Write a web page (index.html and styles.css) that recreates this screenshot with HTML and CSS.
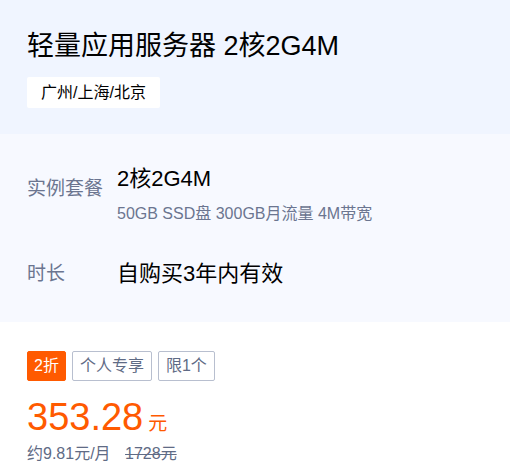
FILE: index.html
```html
<!DOCTYPE html>
<html lang="zh-CN">
<head>
    <meta charset="UTF-8">
    <meta name="viewport" content="width=device-width, initial-scale=1.0">
    <title>轻量应用服务器</title>
    <link rel="stylesheet" href="styles.css">
</head>
<body>
    <div class="product-head">
        <h1>轻量应用服务器 2核2G4M</h1>
        <span class="region">广州/上海/北京</span>
    </div>

    <div class="spec">
        <div class="spec-row spec-row-multi">
            <div class="spec-label">实例套餐</div>
            <div class="spec-value">
                <div class="value-main">2核2G4M</div>
                <div class="value-sub">50GB SSD盘 300GB月流量 4M带宽</div>
            </div>
        </div>
        <div class="spec-row">
            <div class="spec-label">时长</div>
            <div class="spec-value">
                <div class="value-main">自购买3年内有效</div>
            </div>
        </div>
    </div>

    <div class="price-box">
        <div class="tags">
            <span class="tag tag-hot">2折</span>
            <span class="tag">个人专享</span>
            <span class="tag">限1个</span>
        </div>
        <div class="price">
            <span class="price-num">353.28</span>
            <span class="price-unit">元</span>
        </div>
        <div class="price-extra">
            <span>约9.81元/月</span>
            <span class="origin">1728元</span>
        </div>
    </div>
</body>
</html>
```

FILE: styles.css
```css
body {
    margin: 0;
    font-family: "Liberation Sans", "Noto Sans CJK SC", sans-serif;
    background-color: #fff;
    color: #000;
}

.product-head {
    background-color: #f0f5ff;
    padding: 26px 27px 26px;
}

.product-head h1 {
    margin: 0;
    font-size: 27px;
    font-weight: normal;
    line-height: 40px;
}

.region {
    display: inline-block;
    margin-top: 11px;
    background-color: #fff;
    border-radius: 2px;
    padding: 0 14px;
    font-size: 16px;
    line-height: 31px;
}

.spec {
    background-color: #f7f9ff;
    padding: 30px 27px 33px;
}

.spec-row {
    display: flex;
    align-items: flex-start;
}

.spec-row + .spec-row {
    margin-top: 34px;
}

.spec-label {
    width: 90px;
    flex-shrink: 0;
    font-size: 19px;
    line-height: 30px;
    color: #6b7590;
}

.spec-row-multi .spec-label {
    margin-top: 10px;
}

.value-main {
    font-size: 22px;
    line-height: 30px;
}

.value-sub {
    margin-top: 9px;
    font-size: 16px;
    line-height: 22px;
    color: #6b7590;
}

.price-box {
    padding: 29px 27px 0;
}

.tags {
    display: flex;
    gap: 6px;
}

.tag {
    border: 1px solid #b8bfcf;
    border-radius: 2px;
    padding: 0 7px;
    font-size: 16px;
    line-height: 28px;
    color: #5f6b85;
}

.tag-hot {
    padding: 0 6px;
    background-color: #ff5a00;
    border-color: #ff5a00;
    color: #fff;
}

.price {
    display: flex;
    align-items: baseline;
    margin-top: 16px;
    color: #ff5a00;
}

.price-num {
    font-size: 38px;
    line-height: 40px;
}

.price-unit {
    font-size: 19px;
    line-height: 20px;
    margin-left: 5px;
}

.price-extra {
    margin-top: 6px;
    font-size: 16px;
    line-height: 22px;
    color: #5f6b85;
}

.origin {
    margin-left: 10px;
    text-decoration: line-through;
}
```
